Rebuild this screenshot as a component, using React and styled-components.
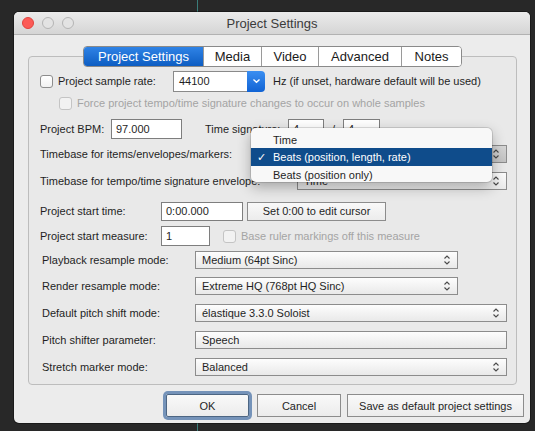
import React from "react";
import styled, { createGlobalStyle } from "styled-components";

const GlobalStyle = createGlobalStyle`
  html, body {
    margin: 0;
    padding: 0;
  }
  body {
    width: 535px;
    height: 431px;
    overflow: hidden;
    background:
      linear-gradient(to right, transparent 197px, #3b7d7a 197px, #3b7d7a 198px, transparent 198px),
      #282828;
    font-family: "Liberation Sans", Arial, sans-serif;
    font-size: 11px;
    color: #1f1f1f;
  }
  #root {
    padding: 12px 0 0 14px;
  }
`;

const Window = styled.div`
  width: 516px;
  height: 411px;
  border-radius: 5px;
  background: #ececec;
  overflow: hidden;
  display: flex;
  flex-direction: column;
  box-shadow: 0 0 0 1px rgba(0, 0, 0, 0.35);
`;

const TitleBar = styled.div`
  height: 22px;
  display: grid;
  grid-template-columns: 1fr auto 1fr;
  align-items: center;
  background: linear-gradient(#ebebeb, #d5d5d5);
  border-bottom: 1px solid #b2b2b2;
`;

const Lights = styled.div`
  display: flex;
  gap: 8px;
  padding-left: 8px;
`;

const Light = styled.span`
  width: 12px;
  height: 12px;
  box-sizing: border-box;
  border-radius: 50%;
  background: ${(p) => (p.red ? "#fc5b57" : "#e3e3e3")};
  border: 1px solid ${(p) => (p.red ? "#e0443e" : "#b4b4b4")};
`;

const Title = styled.div`
  font-size: 13px;
  color: #3b3b3b;
`;

const Group = styled.div`
  margin: 21px 13px 0 14px;
  border: 1px solid #bdbdbd;
  border-radius: 4px;
  background: #e9e9e9;
  padding-bottom: 4px;
  display: flex;
  flex-direction: column;
`;

const TabRow = styled.div`
  display: flex;
  justify-content: center;
  margin-top: -11px;
  margin-bottom: 3px;
`;

const TabBar = styled.div`
  display: flex;
  height: 19px;
  border: 1px solid #8a8a8a;
  border-radius: 4px;
  overflow: hidden;
  background: #fff;
`;

const Tab = styled.div`
  width: ${(p) => p.w}px;
  box-sizing: border-box;
  display: flex;
  align-items: center;
  justify-content: center;
  font-size: 13px;
  color: ${(p) => (p.active ? "#fff" : "#1a1a1a")};
  background: ${(p) => (p.active ? "linear-gradient(#2f83e6, #0d5dc2)" : "#fff")};
  border-left: ${(p) => (p.first ? "none" : "1px solid #9a9a9a")};
`;

const Row = styled.div`
  height: ${(p) => p.h}px;
  display: flex;
  align-items: center;
  padding-left: ${(p) => p.indent ?? 11}px;
  white-space: nowrap;
`;

const Label = styled.span`
  width: ${(p) => (p.w ? `${p.w}px` : "auto")};
  flex-shrink: 0;
  margin-left: ${(p) => p.ml ?? 0}px;
  color: ${(p) => (p.disabled ? "#a4a4a4" : "#1f1f1f")};
`;

const Check = styled.span`
  width: 13px;
  height: 13px;
  box-sizing: border-box;
  flex-shrink: 0;
  border-radius: 3px;
  margin-left: ${(p) => p.ml ?? 0}px;
  margin-right: 5px;
  border: 1px solid ${(p) => (p.disabled ? "#c4c4c4" : "#8d8d8d")};
  background: ${(p) => (p.disabled ? "#f2f2f2" : "linear-gradient(#ffffff, #f1f1f1)")};
`;

const Input = styled.div`
  width: ${(p) => p.w}px;
  height: ${(p) => p.h ?? 20}px;
  box-sizing: border-box;
  flex-shrink: 0;
  display: flex;
  align-items: center;
  padding-left: 4px;
  background: #fff;
  border: 1px solid #7e7e7e;
`;

const Slash = styled.span`
  width: 19px;
  text-align: center;
`;

const Combo = styled.div`
  display: flex;
  height: 21px;
  width: 92px;
  flex-shrink: 0;
`;

const ComboField = styled.div`
  flex: 1;
  display: flex;
  align-items: center;
  padding-left: 5px;
  background: #fff;
  border: 1px solid #8a8a8a;
  border-right: none;
`;

const ComboArrow = styled.div`
  width: 18px;
  display: flex;
  align-items: center;
  justify-content: center;
  border-radius: 0 4px 4px 0;
  background: linear-gradient(#3a8ef1, #1163d4);
`;

const SelectWrap = styled.div`
  position: relative;
  flex-shrink: 0;
`;

const Select = styled.div`
  width: ${(p) => p.w}px;
  height: 18px;
  box-sizing: border-box;
  display: flex;
  align-items: center;
  justify-content: space-between;
  padding: 0 6px 0 6px;
  border: 1px solid #8c8c8c;
  background: ${(p) =>
    p.pressed ? "linear-gradient(#d6d6d6, #c3c3c3)" : "linear-gradient(#fdfdfd, #e9e9e9)"};
`;

const Button = styled.div`
  width: ${(p) => p.w}px;
  height: 23px;
  box-sizing: border-box;
  display: flex;
  align-items: center;
  justify-content: center;
  margin-right: ${(p) => p.mr ?? 0}px;
  border: 1px solid ${(p) => (p.focus ? "#4d6683" : "#8c8c8c")};
  border-radius: ${(p) => (p.focus ? "2px" : "0")};
  background: linear-gradient(#f9f9f9, #ececec);
  box-shadow: ${(p) => (p.focus ? "0 0 0 3px #7593b9" : "none")};
`;

const SmallButton = styled(Button)`
  height: 19px;
  margin-left: 4px;
`;

const Footer = styled.div`
  display: flex;
  justify-content: flex-end;
  margin-top: 9px;
  padding-right: 6px;
`;

const Menu = styled.div`
  position: absolute;
  left: -46px;
  top: -17px;
  width: 241px;
  height: 54px;
  box-sizing: border-box;
  padding-top: 3px;
  border-radius: 5px;
  background: #f8f8f8;
  box-shadow: 0 5px 14px rgba(0, 0, 0, 0.3), 0 0 0 1px rgba(0, 0, 0, 0.12);
  z-index: 5;
`;

const MenuItem = styled.div`
  height: ${(p) => p.h ?? 17}px;
  display: flex;
  align-items: center;
  padding-left: 22px;
  position: relative;
  color: ${(p) => (p.active ? "#fff" : "#1f1f1f")};
  background: ${(p) => (p.active ? "#0f4c8b" : "transparent")};
`;

const Tick = styled.span`
  position: absolute;
  left: 6px;
  font-size: 11px;
  font-family: "DejaVu Sans", sans-serif;
`;

function UpDown() {
  return (
    <svg width="8" height="12" viewBox="0 0 8 12">
      <path d="M1.5 4.5 L4 2 L6.5 4.5 M1.5 7.5 L4 10 L6.5 7.5" fill="none" stroke="#4a4a4a" strokeWidth="1.1" />
    </svg>
  );
}

function ChevronDown() {
  return (
    <svg width="9" height="6" viewBox="0 0 9 6">
      <path d="M1.5 1.5 L4.5 4.3 L7.5 1.5" fill="none" stroke="#fff" strokeWidth="1.4" />
    </svg>
  );
}

const tabs = [
  { name: "Project Settings", w: 119, active: true },
  { name: "Media", w: 58 },
  { name: "Video", w: 57 },
  { name: "Advanced", w: 83 },
  { name: "Notes", w: 60 },
];

const modeRows = [
  { label: "Playback resample mode:", value: "Medium (64pt Sinc)", w: 263, h: 24 },
  { label: "Render resample mode:", value: "Extreme HQ (768pt HQ Sinc)", w: 263, h: 28 },
  { label: "Default pitch shift mode:", value: "élastique 3.3.0 Soloist", w: 312, h: 26 },
  { label: "Pitch shifter parameter:", value: "Speech", w: 312, h: 28, noArrow: true },
  { label: "Stretch marker mode:", value: "Balanced", w: 312, h: 26 },
];

export default function App() {
  return (
    <>
      <GlobalStyle />
      <Window>
        <TitleBar>
          <Lights>
            <Light red />
            <Light />
            <Light />
          </Lights>
          <Title>Project Settings</Title>
          <div />
        </TitleBar>

        <Group>
          <TabRow>
            <TabBar>
              {tabs.map((t, i) => (
                <Tab key={t.name} w={t.w} active={t.active} first={i === 0}>
                  {t.name}
                </Tab>
              ))}
            </TabBar>
          </TabRow>

          <Row h={22}>
            <Check />
            <Label w={115}>Project sample rate:</Label>
            <Combo>
              <ComboField>44100</ComboField>
              <ComboArrow>
                <ChevronDown />
              </ComboArrow>
            </Combo>
            <Label ml={8}>Hz (if unset, hardware default will be used)</Label>
          </Row>

          <Row h={22} indent={30}>
            <Check disabled />
            <Label disabled>Force project tempo/time signature changes to occur on whole samples</Label>
          </Row>

          <Row h={30}>
            <Label w={71}>Project BPM:</Label>
            <Input w={71}>97.000</Input>
            <Label w={83} ml={23}>Time signature:</Label>
            <Input w={36}>4</Input>
            <Slash>/</Slash>
            <Input w={37}>4</Input>
          </Row>

          <Row h={20}>
            <Label w={257}>Timebase for items/envelopes/markers:</Label>
            <SelectWrap>
              {/* popup is open over this select, so its value is hidden */}
              <Select w={210} pressed>
                <span />
                <UpDown />
              </Select>
              <Menu>
                <MenuItem>Time</MenuItem>
                <MenuItem active h={18}>
                  <Tick>✓</Tick>
                  Beats (position, length, rate)
                </MenuItem>
                <MenuItem>Beats (position only)</MenuItem>
              </Menu>
            </SelectWrap>
          </Row>

          <Row h={34}>
            <Label w={257}>Timebase for tempo/time signature envelope:</Label>
            <Select w={210}>
              <span>Time</span>
              <UpDown />
            </Select>
          </Row>

          <Row h={26}>
            <Label w={121}>Project start time:</Label>
            <Input w={82} h={19}>0:00.000</Input>
            <SmallButton w={139}>Set 0:00 to edit cursor</SmallButton>
          </Row>

          <Row h={24}>
            <Label w={121}>Project start measure:</Label>
            <Input w={49}>1</Input>
            <Check disabled ml={13} />
            <Label disabled>Base ruler markings off this measure</Label>
          </Row>

          {modeRows.map((r) => (
            <Row key={r.label} h={r.h} indent={13}>
              <Label w={153}>{r.label}</Label>
              <Select w={r.w}>
                <span>{r.value}</span>
                {!r.noArrow && <UpDown />}
              </Select>
            </Row>
          ))}
        </Group>

        <Footer>
          <Button w={83} mr={8} focus>
            OK
          </Button>
          <Button w={84} mr={6}>
            Cancel
          </Button>
          <Button w={177}>Save as default project settings</Button>
        </Footer>
      </Window>
    </>
  );
}
